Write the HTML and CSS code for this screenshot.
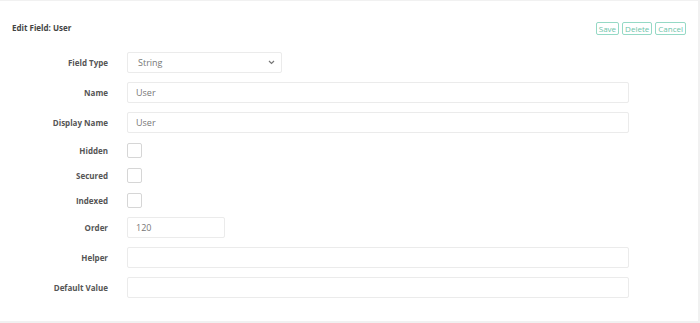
FILE: index.html
```html
<!DOCTYPE html>
<html lang="en">
<head>
  <meta charset="UTF-8">
  <title>Edit Field</title>
  <link rel="stylesheet" href="styles.css">
</head>
<body>

<div class="card">
  <!-- Header -->
  <div class="card-head">
    <h2>Edit Field: User</h2>
    <div class="actions">
      <button>Save</button>
      <button>Delete</button>
      <button>Cancel</button>
    </div>
  </div>

  <!-- Field form -->
  <form class="field-form">
    <div class="row">
      <label>Field Type</label>
      <div class="select">
        <span>String</span>
        <svg width="7" height="5" viewBox="0 0 7 5"><path d="M1 1 L3.5 3.5 L6 1" fill="none" stroke="#777" stroke-width="1.2"/></svg>
      </div>
    </div>
    <div class="row">
      <label>Name</label>
      <input type="text" value="User">
    </div>
    <div class="row">
      <label>Display Name</label>
      <input type="text" value="User">
    </div>
    <div class="row check">
      <label>Hidden</label>
      <span class="box"></span>
    </div>
    <div class="row check">
      <label>Secured</label>
      <span class="box"></span>
    </div>
    <div class="row check">
      <label>Indexed</label>
      <span class="box"></span>
    </div>
    <div class="row">
      <label>Order</label>
      <input type="text" class="short" value="120">
    </div>
    <div class="row">
      <label>Helper</label>
      <input type="text">
    </div>
    <div class="row">
      <label>Default Value</label>
      <input type="text">
    </div>
  </form>
</div>

</body>
</html>
```

FILE: styles.css
```css
* { margin: 0; padding: 0; box-sizing: border-box; }
html, body {
  width: 100%;
  height: 100%;
  font-family: "Open Sans", sans-serif;
  background: #f1f1f1;
}
.card {
  background: #fff;
  margin-top: 1px;
  width: 698px;
  height: 320px;
  padding: 0 12px;
}
.card-head {
  display: flex;
  justify-content: space-between;
  align-items: center;
  height: 51px;
  padding-top: 3px;
}
.card-head h2 {
  font-size: 8px;
  font-weight: 700;
  color: #444;
  margin-top: -1px;
}
.actions {
  display: flex;
  gap: 3px;
  margin-right: 0;
}
.actions button {
  font-family: "Open Sans", sans-serif;
  font-size: 8px;
  height: 13px;
  padding: 0 2px;
  background: #fff;
  color: #6cc3a9;
  border: 1px solid #95d9c5;
  border-radius: 2px;
}
.field-form {
  display: flex;
  flex-direction: column;
  gap: 9px;
}
.row {
  display: flex;
  align-items: center;
  height: 21px;
}
.row label {
  width: 96px;
  text-align: right;
  font-size: 8px;
  font-weight: 700;
  color: #555;
  margin-right: 19px;
}
.row input, .select {
  height: 21px;
  width: 502px;
  border: 1px solid #ebebeb;
  border-radius: 2px;
  padding: 0 8px;
  font-family: "Open Sans", sans-serif;
  font-size: 9px;
  color: #777;
  outline: none;
}
.row input.short {
  width: 98px;
}
.select {
  width: 155px;
  display: flex;
  justify-content: space-between;
  align-items: center;
  padding: 0 6px 0 10px;
}
.row.check {
  height: 16px;
}
.box {
  width: 15px;
  height: 15px;
  border: 1px solid #d6d6d6;
  border-radius: 2px;
}
```
